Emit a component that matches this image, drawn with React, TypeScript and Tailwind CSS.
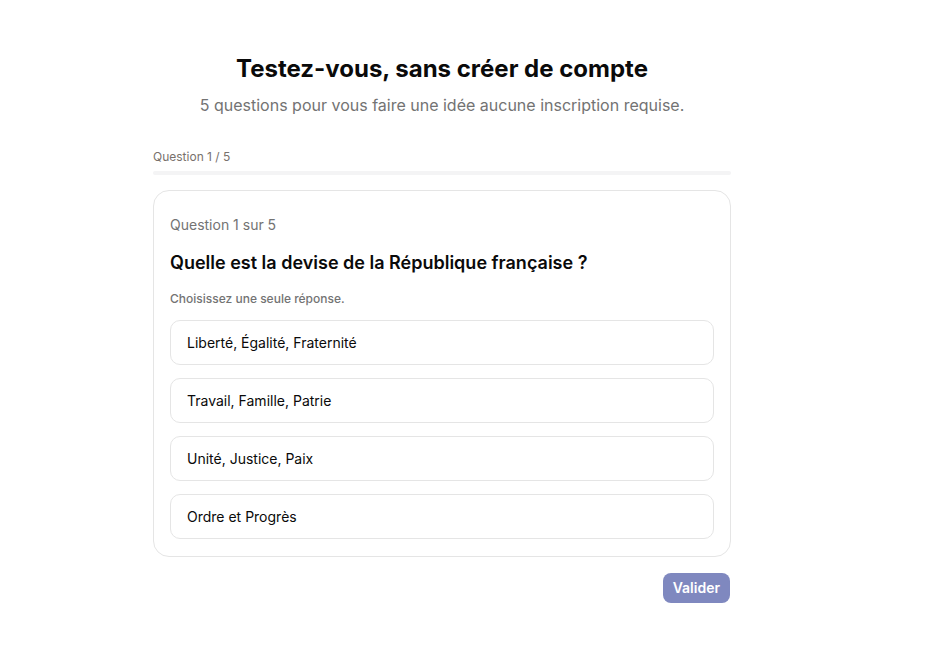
const options = [
  "Liberté, Égalité, Fraternité",
  "Travail, Famille, Patrie",
  "Unité, Justice, Paix",
  "Ordre et Progrès",
];

export default function App() {
  return (
    <div className="min-h-screen bg-white font-['Inter',sans-serif] text-[#0a0a0a]">
      <div className="ml-[153px] w-[578px] pt-[53px]">
        {/* Header */}
        <div className="text-center">
          <h1 className="text-2xl font-bold">Testez-vous, sans créer de compte</h1>
          <p className="mt-2 text-base text-[#737373]">
            5 questions pour vous faire une idée aucune inscription requise.
          </p>
        </div>

        {/* Progress */}
        <div className="mt-8">
          <div className="text-xs text-[#78716c]">Question 1 / 5</div>
          <div className="mt-1.5 h-1 w-full rounded-full bg-[#f4f4f5]" />
        </div>

        {/* Card */}
        <div className="mt-[15px] rounded-2xl border border-[#e5e5e5] px-4 pb-[17px] pt-6">
          <div className="text-sm text-[#737373]">Question 1 sur 5</div>
          <h2 className="mt-[14px] text-lg font-semibold">Quelle est la devise de la République française ?</h2>
          <p className="mt-[14px] text-xs font-medium text-[#737373]">Choisissez une seule réponse.</p>
          <div className="mt-[13px] flex flex-col gap-[13px]">
            {options.map((o) => (
              <button
                key={o}
                className="flex h-[45px] w-full items-center rounded-[10px] border border-[#e5e5e5] bg-white px-4 text-left text-sm"
              >
                {o}
              </button>
            ))}
          </div>
        </div>

        <div className="mt-4 flex justify-end pr-px">
          <button className="h-[30px] rounded-lg bg-[#7f88bf] px-2.5 text-sm font-semibold text-white">
            Valider
          </button>
        </div>
      </div>
    </div>
  );
}
